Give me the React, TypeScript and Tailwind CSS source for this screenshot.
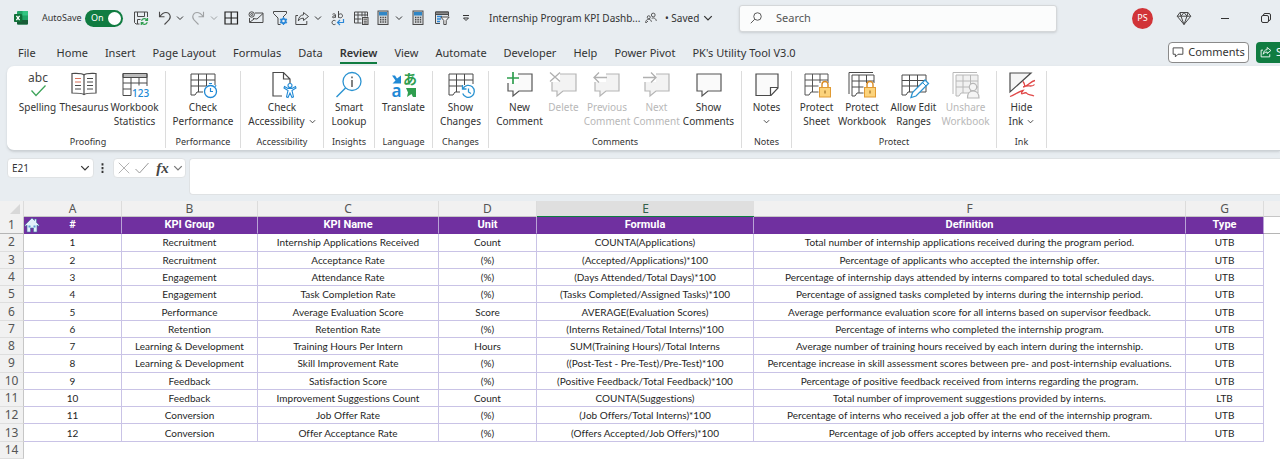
import React from "react";

type P = { children?: React.ReactNode; className?: string };

const Svg = ({ children, className = "size-4", box = 16 }: P & { box?: number }) => (
  <svg viewBox={`0 0 ${box} ${box}`} className={`shrink-0 overflow-visible ${className}`} fill="none" stroke="#4a4a4a" strokeWidth="1" aria-hidden="true">
    {children}
  </svg>
);

const Chevron = ({ className = "size-2" }: P) => (
  <svg viewBox="0 0 8 8" className={`shrink-0 ${className}`} fill="none" stroke="currentColor" strokeWidth="1" aria-hidden="true">
    <path d="M1 2.5 4 5.5 7 2.5" />
  </svg>
);

const Tool = ({ label, children, className = "" }: P & { label: string }) => (
  <button type="button" aria-label={label} className={`flex shrink-0 items-center ${className}`}>
    {children}
  </button>
);

const Calculator = () => (
  <Svg>
    <rect x="3" y="1" width="10" height="13.5" fill="#d5d8da" />
    <rect x="4" y="2" width="8" height="3.5" fill="#2f86c6" stroke="none" />
    <path d="M5 7.5h1.4M7.4 7.5h1.4M9.8 7.5h1.4M5 9.7h1.4M7.4 9.7h1.4M9.8 9.7h1.4M5 12h1.4M7.4 12h1.4M9.8 12h1.4" strokeWidth="1.4" />
  </Svg>
);

function TitleBar() {
  return (
    <header className="flex h-9 items-center text-[#333]">
      <svg viewBox="0 0 16 16" className="ml-[13px] size-4 shrink-0" aria-hidden="true">
        <rect x="4" y="1" width="11" height="13.5" rx="1" fill="#21a366" />
        <path d="M9.5 1H14a1 1 0 0 1 1 1v3.5H9.5z" fill="#33c481" />
        <path d="M4 5.5h5.5V10H4z" fill="#107c41" />
        <path d="M4 10h11v3.5a1 1 0 0 1-1 1H5a1 1 0 0 1-1-1z" fill="#185c37" />
        <rect x="1" y="4" width="8" height="8" rx=".8" fill="#0f7038" />
        <path d="m3.4 5.8 3.2 4.4M6.6 5.8 3.4 10.2" stroke="#fff" strokeWidth="1.3" />
      </svg>
      <span className="ml-[13px] w-[39px] text-[9px] whitespace-nowrap">AutoSave</span>
      <button type="button" role="switch" aria-checked="true" aria-label="AutoSave" className="ml-1 flex h-[17px] w-[38px] shrink-0 items-center justify-between rounded-full bg-[#107c41] pr-0.5 pl-1.5 text-[9px] text-white">
        On<span className="size-[13px] rounded-full bg-white" />
      </button>
      <Tool label="Save" className="ml-2.5">
        <Svg>
          <path d="M6.5 14H3L1.5 12.5V2h13v5M4.5 2v4.500h7V2M4.500 14V9.500h3" />
          <g stroke="#2f9e4f" strokeWidth="1.2"><path d="M8.5 10.800a3.200 3.200 0 0 1 5.600-.8M14.500 8v2.300h-2.300M14.300 12.200a3.200 3.200 0 0 1-5.600.8M8.300 15v-2.300h2.300" /></g>
        </Svg>
      </Tool>
      <Tool label="Undo" className="ml-2">
        <Svg><path d="M2.5 1.8v5h5M2.8 6.6C4.6 4 6.5 2.5 9 2.5a4.300 4.300 0 0 1 3 7.300L7.500 14.500" strokeWidth="1.1" /></Svg>
      </Tool>
      <Tool label="Undo history" className="ml-[3px]"><Chevron /></Tool>
      <Tool label="Redo" className="ml-1.5 opacity-45">
        <Svg><path d="M13.5 1.8v5h-5M13.2 6.6C11.4 4 9.5 2.5 7 2.5a4.300 4.300 0 0 0-3 7.300l4.500 4.700" strokeWidth="1.1" /></Svg>
      </Tool>
      <Tool label="Redo history" className="ml-1 opacity-40"><Chevron /></Tool>
      <Tool label="Borders" className="ml-[5px]">
        <Svg><path d="M2 2h12.5v12H2zM8.2 2v12M2 8h12.5" stroke="#222" strokeWidth="1.2" /></Svg>
      </Tool>
      <Tool label="Email" className="ml-[9px]">
        <Svg><path d="M7 3h8v9.500H1.500V8M5 8.500l4 .5 6-5.500M1.800 12.200 6 9" /><circle cx="3.700" cy="4.500" r="2.700" /><circle cx="3.700" cy="4.500" r="1" /></Svg>
      </Tool>
      <Tool label="Filter settings" className="ml-2">
        <Svg>
          <path d="M8.5 14.5H6V8L1.500 3.500v-2h13v2L11 7" />
          <g stroke="#2b88d8"><circle cx="11.5" cy="11" r="2.2" strokeWidth="1.8" /><path d="M11.500 7v2M11.500 13v2M8 9l1.600 1M13.400 12 15 13M8 13l1.600-1M13.400 10 15 9" strokeWidth="1.3" /></g>
        </Svg>
      </Tool>
      <Tool label="Share" className="ml-1.5">
        <Svg><path d="M4 5.5H1.800v9h11V11M9.500 2.500l5 4-5 4V8.200C7 8.200 5.500 9 4.300 11c.3-3.700 2.200-6 5.200-6.200z" /></Svg>
      </Tool>
      <Tool label="Share options" className="ml-1"><Chevron /></Tool>
      <Tool label="Replace" className="ml-2">
        <Svg>
          <path d="M2.500 4.300c.8-.8 3-.7 3 .8v2.600M5.500 5.700c-3.500 0-3.800 2-2 2 1.200 0 2-.8 2-1.700M8.500 1v6.800M8.500 5.500c.3-2.300 4-2.300 4 .3 0 2.400-3.500 2.700-4 .5" />
          <path d="M5.500 10.800c-1.500-1-3.500-.2-3.500 1.700s2 2.700 3.500 1.700" />
          <path d="M13.500 9v3.500H7.500M10 10l-2.500 2.500L10 15" stroke="#2b88d8" strokeWidth="1.200" />
        </Svg>
      </Tool>
      <Tool label="Table" className="ml-[7px]">
        <Svg><path d="M8.5 13H1.500V2h13v4.500M1.500 5h13M1.500 9H8.500M5 2v11M9 2v4.500M12 2v4.500" /><rect x="9.500" y="7.500" width="5.500" height="7" fill="#ddd" /><path d="M10.500 9.200h3.500M10.800 11.200h3M10.800 13h3" /></Svg>
      </Tool>
      <Tool label="Calculate" className="ml-1.5"><Calculator /></Tool>
      <Tool label="Calculate options" className="ml-1"><Chevron /></Tool>
      <Tool label="Calculate sheet" className="ml-[7px]"><Calculator /></Tool>
      <Tool label="Slicer" className="ml-2">
        <Svg>
          <path d="M6 13.500H1.500V2h13v4" fill="#e4e6e8" /><path d="M1.500 2h13v2.500h-13z" fill="#888" />
          <path d="M3 6.500h5M3 9h4M3 11.500h3" stroke="#2b88d8" strokeWidth="1.500" />
          <path d="M6.800 7h8.400l-3 3.500v4h-2.400v-4z" fill="#f2f2f2" />
        </Svg>
      </Tool>
      <Tool label="Customize toolbar" className="ml-3">
        <svg viewBox="0 0 8 8" className="size-2" fill="none" stroke="#333"><path d="M1 1.500h6M1.500 4 4 6.500 6.500 4z" /></svg>
      </Tool>
      <h1 className="ml-[19px] w-[148px] text-[10px] whitespace-nowrap">Internship Program KPI Dashb...</h1>
      <Svg className="ml-2 size-3">
        <circle cx="5" cy="7" r="2" strokeWidth="1.200" /><path d="M.8 14.500c0-3 1.500-4.700 4-4.700s3.500 1.500 3.800 3.200M1.500 14.500 4 12" strokeWidth="1.200" />
        <circle cx="11" cy="4" r="2.500" strokeWidth="1.200" /><path d="M9 8.500c3-1.500 6 .5 6 3.500" strokeWidth="1.200" />
      </Svg>
      <button type="button" className="ml-2 flex w-[50px] shrink-0 items-center gap-1 text-[10px] whitespace-nowrap">
        <span>• Saved</span><Chevron className="size-2.5" />
      </button>
      <label className="ml-6 flex h-[27px] w-[318px] items-center rounded-[3px] border border-[#d4d7d9] bg-[#fbfcfc] pl-2.5 shadow-sm">
        <Svg className="size-3"><circle cx="10" cy="6" r="5" strokeWidth="1.200" /><path d="M6.300 9.700 1 15" strokeWidth="1.200" /></Svg>
        <input type="text" aria-label="Search" placeholder="Search" className="ml-3.5 w-40 bg-transparent text-[11px] outline-none placeholder:text-[#555]" />
      </label>
      <div className="ml-auto flex shrink-0 items-center">
        <button type="button" aria-label="Account" className="size-[21px] rounded-full bg-[#d13438] text-[9px] text-white">PS</button>
        <Tool label="Premium" className="ml-[23px]">
          <Svg><path d="M4 2.500h8l2.800 3.700L8 14.500 1.200 6.200zM1.200 6.200h13.600M5 6.200 8 14.500l3-8.300M4 2.500l1 3.700L8 2.500l3 3.700 1-3.700" /></Svg>
        </Tool>
        <Tool label="Minimize" className="ml-7"><svg viewBox="0 0 10 10" className="size-2.5"><path d="M1 5.500h8" stroke="#333" /></svg></Tool>
        <Tool label="Restore" className="mr-2 ml-[30px]">
          <svg viewBox="0 0 12 12" className="size-3" fill="none" stroke="#333"><rect x="1.500" y="3.500" width="7" height="7" rx="1.500" /><path d="M3.500 3.500v-.5A1.500 1.500 0 0 1 5 1.500h4A1.500 1.500 0 0 1 10.500 3v4A1.500 1.500 0 0 1 9 8.500h-.5" /></svg>
        </Tool>
      </div>
    </header>
  );
}

const tabs = ["File", "Home", "Insert", "Page Layout", "Formulas", "Data", "Review", "View", "Automate", "Developer", "Help", "Power Pivot", "PK's Utility Tool V3.0"];

function TabBar() {
  return (
    <nav className="flex h-[30px] items-center gap-[17px] overflow-hidden pt-1 pl-[18px] text-[11px] whitespace-nowrap">
      {tabs.map((t) => (
        <a key={t} href="#" className={t === "Review" ? "border-b-2 border-[#107c41] leading-[19px] font-semibold" : t === "File" ? "mr-1 border-b-2 border-transparent leading-[19px]" : "border-b-2 border-transparent leading-[19px]"}>
          {t}
        </a>
      ))}
      <div className="mb-0.5 ml-auto flex shrink-0 gap-[7px]">
        <button type="button" className="flex h-[21px] w-[81px] items-center justify-center gap-1 rounded-[4px] border border-[#8a8a8a] bg-white">
          <Svg className="size-3"><path d="M1.500 2.500h13v8.500H8l-3.500 3.500V11h-3z" strokeWidth="1.300" /></Svg>
          Comments
        </button>
        <button type="button" className="flex h-[21px] w-6 items-center gap-1 overflow-hidden rounded-l-[4px] bg-[#107c41] pl-1 text-white">
          <svg viewBox="0 0 16 16" className="size-3 shrink-0" fill="none" stroke="#fff" strokeWidth="1.200"><path d="M4 5.500H1.500v9H13V11M9.500 2l5 4-5 4V8C7 8 5.500 9 4.300 11c.3-3.700 2.200-6 5.200-6.200z" /></svg>
          Share
        </button>
      </div>
    </nav>
  );
}

const Table = ({ stroke = "#555" }: { stroke?: string }) => (
  <path d="M2 3h23v18H8l-2 3H2zM2 9h23M2 15h23M9.500 3v18M17 3v18" stroke={stroke} />
);
const Big = ({ children }: P) => <Svg box={28} className="size-7">{children}</Svg>;
const Bubble = ({ dim = false, fill = "none" }: { dim?: boolean; fill?: string }) => (
  <path d="M2 3h24v17H13l-6 5v-5H2z" fill={fill} stroke={dim ? "#b5b5b5" : "#555"} strokeWidth="1.200" />
);
const Lock = () => (
  <g><path d="M19 17v-3.500a3 3 0 0 1 6 0V17" stroke="#d98a1f" strokeWidth="1.400" /><rect x="16.500" y="16.500" width="11" height="9.500" fill="#fcd37b" stroke="#e09a33" /><path d="M22 19.500v3" stroke="#8a5a10" /></g>
);

const icons: Record<string, React.ReactNode> = {
  spelling: (
    <Big><text x="14" y="11" textAnchor="middle" fontSize="12" fill="#444" stroke="none" className="font-['Noto_Sans']">abc</text><path d="m7.500 19.500 4.500 5 9.500-10" stroke="#3fa45b" strokeWidth="1.300" /></Big>
  ),
  thesaurus: (
    <Big><path d="M14 4c-2-2-6-1.500-12-1.500V22c6 0 10 0 12 1.500 2-1.500 6-1.500 12-1.500V2.500C20 2.500 16 2 14 4zM14 4v19.500" strokeWidth="1.200" /><path d="M5 7.500h6M5 11h6" stroke="#d9705a" /><path d="M5 14.500h6M5 18h6M17 7.500h6M17 11h6M17 14.500h6M17 18h6" /></Big>
  ),
  stats: (
    <Big><path d="M2 2.500h24v4H2z" fill="#bbb" /><path d="M10 24.500H2V2.500h24V15M2 12h24M2 18h8M10 6.500v18M18 6.500v8" /><text x="11" y="25.500" fontSize="10" fontWeight="500" fill="#2089d5" stroke="none" className="font-['Noto_Sans']">123</text></Big>
  ),
  performance: (
    <Big><path d="M14 21H8l-2 3H2V3h24v11M2 9h24M2 15h15M9.500 3v18M17.500 3v12" /><circle cx="21.500" cy="20.500" r="6" stroke="#2089d5" fill="#fff" strokeWidth="1.300" /><path d="M21.500 17v3.500h2.500M20 12.500h3M26 15.500l1.200-1.200" stroke="#2089d5" strokeWidth="1.200" /></Big>
  ),
  accessibility: (
    <Big><path d="M14 25H5V1.500h10.500L22 8v4M15.500 1.500V8H22" strokeWidth="1.200" /><g stroke="#2089d5" strokeWidth="1.100" fill="#fff"><path d="m16.500 15.500 3.500 2h4l3.500-2 .5 1.500-4 2.500 1.500 6.500-1.500.5-2-4.500-2 4.500-1.500-.5 1.500-6.500-4-2.500z" /><circle cx="22" cy="14.500" r="2" /></g></Big>
  ),
  lookup: (
    <Big><circle cx="17" cy="10.500" r="9" stroke="#2b93d1" strokeWidth="1.300" /><path d="M10.500 17 1.500 26" stroke="#2b93d1" strokeWidth="1.400" /><path d="M17 9v7M17 5.500v1.800" strokeWidth="1.400" /></Big>
  ),
  translate: (
    <Big>
      <text x="13" y="13" fontSize="14" fontWeight="700" fill="#2f9e4f" stroke="none" className="font-['Noto_Sans_CJK_JP']">あ</text>
      <text x="1.500" y="25.500" fontSize="17" fontWeight="600" fill="#2089d5" stroke="none" className="font-['Noto_Sans']">a</text>
      <path d="M2 4.500h3l2 3 4-3v8H2.500l3-3z" fill="#2089d5" stroke="none" /><path d="M16 17h10v9h-3l-1.500-3-4.500 3 1-4.500z" fill="#2f9e4f" stroke="none" />
    </Big>
  ),
  changes: (
    <Big><path d="M13 21H8l-2 3H2V3h24v10M2 9h24M2 15h13M9.500 3v18M17.500 3v11" /><path d="M16 17.500a6 6 0 1 1-.3 5M15.500 14v4h4M21.500 17.500v3.500l2.500 1.500" stroke="#2b93d1" strokeWidth="1.300" /></Big>
  ),
  newComment: <Big><Bubble fill="#fafafa" /><path d="M0 0h12v12H0z" fill="#fff" stroke="none" /><path d="M7 1v12M1 7h12" stroke="#2f9e4f" strokeWidth="1.700" /></Big>,
  del: <Big><Bubble dim fill="#f3f3f3" /><path d="M0 1h10v10H0z" fill="#fff" stroke="none" /><path d="m0 1.500 10 9M10 1.500 0 10.500" stroke="#b0b0b0" strokeWidth="1.300" /></Big>,
  prev: <Big><Bubble dim fill="#f3f3f3" /><path d="M0 2h13v9H0z" fill="#fff" stroke="none" /><path d="M14 6.500H1M6 1.500l-5 5 5 5" stroke="#b0b0b0" strokeWidth="1.300" /></Big>,
  next: <Big><Bubble dim fill="#f3f3f3" /><path d="M0 2h13v9H0z" fill="#fff" stroke="none" /><path d="M0 6.500h13M8 1.500l5 5-5 5" stroke="#b0b0b0" strokeWidth="1.300" /></Big>,
  show: <Big><Bubble fill="#fafafa" /></Big>,
  notes: <Big><path d="M3 3h22v14l-7 7.500H3zM25 16.500h-7.500v8" fill="#fafafa" strokeWidth="1.200" /></Big>,
  protectSheet: <Big><Table /><path d="M15.500 12h13v15h-13z" fill="#fff" stroke="none" /><Lock /></Big>,
  protectBook: <Big><path d="M1 23V1.500h24" /><path d="M4 4h22v18H9l-2 3H4zM4 10h22M4 16h22M11 4v18M18.500 4v18" /><path d="M15.500 12h13v15h-13z" fill="#fff" stroke="none" /><Lock /></Big>,
  ranges: <Big><path d="M2 4h24v17H8l-2 3H2zM2 9.500h24M2 15h24M9.500 4v17M17.500 4v17" /><path d="m11 26.500 1.500-5L25 9l3.500 3.500L16 25z" fill="#fff" stroke="#2b93d1" strokeWidth="1.300" /><path d="m22.500 11.500 3.500 3.500" stroke="#2b93d1" /></Big>,
  unshare: <Big><g stroke="#b8b8b8"><path d="M1 23V1.500h24" /><path d="M4 4h22v18H9l-2 3H4zM4 10h22M4 16h22M11 4v18M18.500 4v18" fill="#f1f1f1" /><path d="M15.500 27c0-5 2-7 5.500-7s6 2 6 7z" fill="#f5f5f5" strokeWidth="1.200" /><circle cx="21" cy="16" r="3.700" fill="#f5f5f5" strokeWidth="1.200" /></g></Big>,
  ink: <Big><path d="M2 2h21L2 21z" fill="#f5f5f5" strokeWidth="1.200" /><path d="M27 9.500c-5 1-7 6-12 6.500M15 10.500c1.500 2 2 3.500 1.500 5 3-1 4-.5 6-.5s3 0 4-1.500M2 25.500c4-1.500 9-5 13-6-2 2.500-2 4 0 3s3-1.500 4 0 4 1 7 2.500" stroke="#e04848" strokeWidth="1.300" /></Big>,
};

type Cmd = { icon: string; lines: string[]; w: string; off?: boolean; menu?: boolean };
const groups: { name: string; w: string; items: Cmd[] }[] = [
  { name: "Proofing", w: "w-[159px] pl-1", items: [
    { icon: "spelling", lines: ["Spelling"], w: "w-[45px]" }, { icon: "thesaurus", lines: ["Thesaurus"], w: "w-[48px]" }, { icon: "stats", lines: ["Workbook", "Statistics"], w: "w-[53px]" } ] },
  { name: "Performance", w: "w-[75px]", items: [{ icon: "performance", lines: ["Check", "Performance"], w: "w-[70px]" }] },
  { name: "Accessibility", w: "w-[83px]", items: [{ icon: "accessibility", lines: ["Check", "Accessibility"], w: "w-[78px]", menu: true }] },
  { name: "Insights", w: "w-[51px]", items: [{ icon: "lookup", lines: ["Smart", "Lookup"], w: "w-[46px]" }] },
  { name: "Language", w: "w-[58px]", items: [{ icon: "translate", lines: ["Translate"], w: "w-[52px]" }] },
  { name: "Changes", w: "w-[56px]", items: [{ icon: "changes", lines: ["Show", "Changes"], w: "w-[50px]" }] },
  { name: "Comments", w: "w-[253px]", items: [
    { icon: "newComment", lines: ["New", "Comment"], w: "w-[50px]" }, { icon: "del", lines: ["Delete"], w: "w-[38px]", off: true },
    { icon: "prev", lines: ["Previous", "Comment"], w: "w-[49px]", off: true }, { icon: "next", lines: ["Next", "Comment"], w: "w-[50px]", off: true },
    { icon: "show", lines: ["Show", "Comments"], w: "w-[54px]" } ] },
  { name: "Notes", w: "w-[50px]", items: [{ icon: "notes", lines: ["Notes", ""], w: "w-[44px]", menu: true }] },
  { name: "Protect", w: "w-[205px]", items: [
    { icon: "protectSheet", lines: ["Protect", "Sheet"], w: "w-[40px]" }, { icon: "protectBook", lines: ["Protect", "Workbook"], w: "w-[51px]" },
    { icon: "ranges", lines: ["Allow Edit", "Ranges"], w: "w-[52px]" }, { icon: "unshare", lines: ["Unshare", "Workbook"], w: "w-[52px]", off: true } ] },
  { name: "Ink", w: "w-[50px]", items: [{ icon: "ink", lines: ["Hide", "Ink"], w: "w-[44px]", menu: true }] },
];

function Ribbon() {
  return (
    <div className="ml-[7px] flex h-[85px] overflow-hidden rounded-l-[7px] border-b border-[#cdd2d6] bg-white pt-[5px] shadow-sm">
      {groups.map((g) => (
        <section key={g.name} aria-label={g.name} className={`mb-0.5 flex shrink-0 flex-col justify-between border-r border-[#dcdcdc] ${g.w}`}>
          <div className="flex justify-center">
            {g.items.map((c, i) => (
              <button key={i} type="button" disabled={c.off} className={`flex shrink-0 flex-col items-center text-[10px] leading-[14px] whitespace-nowrap ${c.w} ${c.off ? "text-[#b8b8b8]" : "text-[#333]"}`}>
                <span className="mb-px">{icons[c.icon]}</span>
                {c.lines.map((l, k) => (
                  <span key={k} className="flex h-3.5 items-center gap-1">
                    {l}
                    {c.menu && k === c.lines.length - 1 && <Chevron className="size-[7px]" />}
                  </span>
                ))}
              </button>
            ))}
          </div>
          <h2 className="text-center text-[9px] leading-3 text-[#333]">{g.name}</h2>
        </section>
      ))}
    </div>
  );
}

function FormulaBar() {
  return (
    <div className="flex items-start pt-[7px] pb-1.5 pl-[7px]">
      <div className="flex h-5 w-[87px] shrink-0 items-center rounded-[4px] border border-[#dfe2e4] bg-white">
        <input type="text" aria-label="Name box" defaultValue="E21" className="w-[72px] pl-1 text-[10px] text-[#333] outline-none" />
        <Chevron className="size-2.5" />
      </div>
      <Svg className="mx-[1px] h-5 w-[15px]"><path d="M8 3v2.200M8 7v2.200M8 11v2.200" stroke="#333" strokeWidth="2" /></Svg>
      <div className="ml-[2px] flex h-5 w-[73px] shrink-0 items-center justify-between rounded-[4px] border border-[#dfe2e4] bg-white pr-0.5 pl-1">
        <Tool label="Cancel"><Svg className="size-3"><path d="m1 1 14 14M15 1 1 15" stroke="#999" /></Svg></Tool>
        <Tool label="Enter"><Svg className="size-4"><path d="m1.500 9 4 4L14.500 3" stroke="#999" /></Svg></Tool>
        <button type="button" aria-label="Insert function" className="ml-0.5 font-['Liberation_Serif',serif] text-[15px] leading-4 font-bold text-[#444] italic">fx</button>
        <Tool label="Function list" className="text-[#777]"><Chevron className="size-2.5" /></Tool>
      </div>
      <textarea aria-label="Formula" className="ml-[3px] h-[37px] flex-1 resize-none rounded-l-[4px] border border-r-0 border-[#dfe2e4] bg-white outline-none" />
    </div>
  );
}

const rows: string[][] = [
  ["1", "Recruitment", "Internship Applications Received", "Count", "COUNTA(Applications)", "Total number of internship applications received during the program period.", "UTB"],
  ["2", "Recruitment", "Acceptance Rate", "(%)", "(Accepted/Applications)*100", "Percentage of applicants who accepted the internship offer.", "UTB"],
  ["3", "Engagement", "Attendance Rate", "(%)", "(Days Attended/Total Days)*100", "Percentage of internship days attended by interns compared to total scheduled days.", "UTB"],
  ["4", "Engagement", "Task Completion Rate", "(%)", "(Tasks Completed/Assigned Tasks)*100", "Percentage of assigned tasks completed by interns during the internship period.", "UTB"],
  ["5", "Performance", "Average Evaluation Score", "Score", "AVERAGE(Evaluation Scores)", "Average performance evaluation score for all interns based on supervisor feedback.", "UTB"],
  ["6", "Retention", "Retention Rate", "(%)", "(Interns Retained/Total Interns)*100", "Percentage of interns who completed the internship program.", "UTB"],
  ["7", "Learning & Development", "Training Hours Per Intern", "Hours", "SUM(Training Hours)/Total Interns", "Average number of training hours received by each intern during the internship.", "UTB"],
  ["8", "Learning & Development", "Skill Improvement Rate", "(%)", "((Post-Test - Pre-Test)/Pre-Test)*100", "Percentage increase in skill assessment scores between pre- and post-internship evaluations.", "UTB"],
  ["9", "Feedback", "Satisfaction Score", "(%)", "(Positive Feedback/Total Feedback)*100", "Percentage of positive feedback received from interns regarding the program.", "UTB"],
  ["10", "Feedback", "Improvement Suggestions Count", "Count", "COUNTA(Suggestions)", "Total number of improvement suggestions provided by interns.", "LTB"],
  ["11", "Conversion", "Job Offer Rate", "(%)", "(Job Offers/Total Interns)*100", "Percentage of interns who received a job offer at the end of the internship program.", "UTB"],
  ["12", "Conversion", "Offer Acceptance Rate", "(%)", "(Offers Accepted/Job Offers)*100", "Percentage of job offers accepted by interns who received them.", "UTB"],
];
const heads = ["#", "KPI Group", "KPI Name", "Unit", "Formula", "Definition", "Type"];

const RowHead = ({ children }: P) => (
  <th scope="row" className="border-r border-b border-r-[#c6c6c6] border-b-[#dedede] bg-[#f1f1f1] p-0 font-['Noto_Sans',sans-serif] text-xs leading-4 font-normal text-[#555]">{children}</th>
);

function Sheet() {
  return (
    <table className="h-[258px] w-full table-fixed border-separate border-spacing-0 bg-white text-center">
      <colgroup>
        <col className="w-6" /><col className="w-[98px]" /><col className="w-[136px]" /><col className="w-[181px]" /><col className="w-[98px]" />
        <col className="w-[217px]" /><col className="w-[432px]" /><col className="w-[78px]" /><col />
      </colgroup>
      <thead>
        <tr className="bg-[#f1f1f1] text-xs leading-[15px] text-[#555]">
          <td className="border-r border-[#dcdcdc] p-0">
            <svg viewBox="0 0 12 12" className="mr-[2px] ml-auto size-3"><path d="M11 1v10H1z" fill="#d8d8d8" /></svg>
          </td>
          {["A", "B", "C", "D", "E", "F", "G"].map((c) => (
            <th key={c} scope="col" className={c === "E" ? "border-b border-b-[#107c41] bg-[#dfdfdf] p-0 font-normal text-[#33614a]" : "border-r border-b border-r-[#dcdcdc] border-b-[#c6c6c6] p-0 font-normal"}>{c}</th>
          ))}
          <td className="border-b border-b-[#c6c6c6] p-0" />
        </tr>
      </thead>
      <tbody className="font-[Lato,sans-serif] text-[10px] leading-4 text-[#1f1f1f] [font-variant-ligatures:none]">
        <tr>
          <th scope="row" className="border-r border-b border-r-[#c6c6c6] border-b-[#b5b5b5] bg-[#f1f1f1] p-0 font-['Noto_Sans',sans-serif] text-xs leading-4 font-normal text-[#555]">1</th>
          {heads.map((h) => (
            <th key={h} scope="col" className="relative border-r border-b border-r-[#b9a3d6] border-b-[#7030a0] bg-[#7030a0] p-0 font-[Roboto,sans-serif] text-[11px] font-bold text-white">
              {h === "#" && (
                <a href="#" aria-label="Home" className="absolute top-0 left-0">
                  <svg viewBox="0 0 16 16" className="size-4" fill="#e2f0fb" stroke="#41719c" strokeWidth=".6"><path d="M8 1 .8 8.200l1 1L3 8.100V15h3.500v-4h3v4H13V8.100l1.200 1.100 1-1L12.500 5.500V2h-2v1.500z" /><path d="M4.500 8.500h2v2h-2zM9.500 8.500h2v2h-2z" fill="#5b9bd5" stroke="none" /></svg>
                </a>
              )}
              {h}
            </th>
          ))}
          <td className="border-b border-[#b5b5b5] p-0" />
        </tr>
        {rows.map((r, i) => (
          <tr key={i}>
            <RowHead>{i + 2}</RowHead>
            {r.map((c, k) => (
              <td key={k} className="overflow-hidden border-r border-b border-[#c9c3e6] p-0 whitespace-nowrap">{c}</td>
            ))}
            <td className="p-0" />
          </tr>
        ))}
        <tr><RowHead>14</RowHead><td colSpan={8} className="p-0" /></tr>
      </tbody>
    </table>
  );
}

export default function App() {
  return (
    <div className="flex min-h-screen flex-col overflow-hidden bg-[#e8edf1] font-['Noto_Sans',sans-serif] text-[#333]">
      <TitleBar />
      <TabBar />
      <Ribbon />
      <FormulaBar />
      <main className="flex-1 bg-white">
        <Sheet />
      </main>
    </div>
  );
}
